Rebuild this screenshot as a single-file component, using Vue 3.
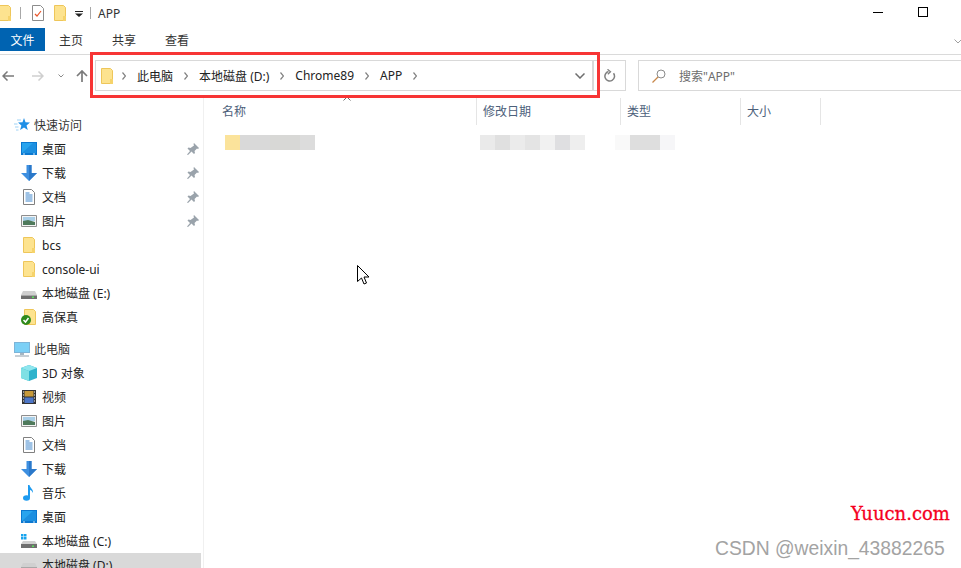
<script setup>
const tabs = ['主页', '共享', '查看']
const crumbs = ['此电脑', '本地磁盘 (D:)', 'Chrome89', 'APP']
const nav = [
  { t: '快速访问', i: 'star', head: true },
  { t: '桌面', i: 'desktop', pin: true },
  { t: '下载', i: 'down', pin: true },
  { t: '文档', i: 'doc', pin: true },
  { t: '图片', i: 'pic', pin: true },
  { t: 'bcs', i: 'folder' },
  { t: 'console-ui', i: 'folder' },
  { t: '本地磁盘 (E:)', i: 'drive' },
  { t: '高保真', i: 'check' },
  { t: '', i: '', blank: true },
  { t: '此电脑', i: 'pc', head: true },
  { t: '3D 对象', i: 'cube' },
  { t: '视频', i: 'film' },
  { t: '图片', i: 'pic' },
  { t: '文档', i: 'doc' },
  { t: '下载', i: 'down' },
  { t: '音乐', i: 'music' },
  { t: '桌面', i: 'desktop' },
  { t: '本地磁盘 (C:)', i: 'win' },
  { t: '本地磁盘 (D:)', i: 'drive', sel: true }
]
const cols = [
  { t: '名称', w: 273 },
  { t: '修改日期', w: 144 },
  { t: '类型', w: 120 },
  { t: '大小', w: 80 }
]
const nameCells = ['#fbe39b', '#d9d9d9', '#d9d9d9', '#d8d8d6', '#d8d8d6', '#dcdcdc']
const dateCells = ['#eaeaea', '#e0e0e0', '#ebebeb', '#e4e4e4', '#f1f1f1', '#dfdfe1', '#eeeeee']
const typeCells = ['#f9f9f9', '#dedede', '#dedede', '#f6f6f8']
</script>

<template>
  <div class="win">
    <svg class="defs" width="0" height="0">
      <defs>
        <symbol id="i-folder" viewBox="0 0 16 16">
          <path d="M2.500.5h9l2 2v13h-11z" fill="#fde38f" stroke="#eec65a"/>
          <path d="M11 11h3v5h-3z" fill="#f6d36b"/>
        </symbol>
        <symbol id="i-star" viewBox="0 0 16 16">
          <path d="M10 1l1.500 4.300 4.500.2-3.500 2.900 1.300 4.600-3.800-2.600-3.900 2.600 1.300-4.600-3.400-2.900 4.500-.2z" fill="#1f8fe6"/>
          <path d="M3 3h4M0 7h3.500M1 10h3.500M2 13h2.500" stroke="#9fd2f5"/>
        </symbol>
        <symbol id="i-desktop" viewBox="0 0 16 16">
          <path d="M0 1h16v13H0z" fill="#0b78d0"/>
          <path d="M1 2h14v10H1z" fill="#28a4ee"/>
          <path d="M1 12L12 2h3v10z" fill="#1c8fe0"/>
          <path d="M2 13h2M12 13h2" stroke="#cfe8fa"/>
        </symbol>
        <symbol id="i-down" viewBox="0 0 16 16">
          <path d="M5.500 0h5v8H16l-8 8-8-8h5.500z" fill="#3d8fe0"/>
          <path d="M8 0h2.500v8H16l-8 8z" fill="#2b78c9"/>
        </symbol>
        <symbol id="i-doc" viewBox="0 0 16 16">
          <path d="M2.500.5h8l3 3v12h-11z" fill="#fff" stroke="#808080"/>
          <path d="M4.500 4h4M4.500 6h7M4.500 8h7M4.500 10h7M4.500 12h7" stroke="#3f86cc"/>
        </symbol>
        <symbol id="i-pic" viewBox="0 0 16 16">
          <path d="M.5 2.500h15v11H.5z" fill="#f4f4f4" stroke="#8e8e8e"/>
          <path d="M2 4h12v4H2z" fill="#a9cfe8"/>
          <path d="M2 8l5-1 7 2v3H2z" fill="#4f7a5c"/>
        </symbol>
        <symbol id="i-drive" viewBox="0 0 16 16">
          <path d="M2 6h12l2 4H0z" fill="#d0d0d0"/>
          <path d="M0 10h16v4H0z" fill="#6f6f6f"/>
          <path d="M0 10h16v1H0z" fill="#a8a8a8"/>
          <path d="M11 11.500h2v1.500h-2z" fill="#5be05b"/>
        </symbol>
        <symbol id="i-win" viewBox="0 0 16 16">
          <path d="M2 8h12l2 3H0z" fill="#d0d0d0"/>
          <path d="M0 11h16v4H0z" fill="#6f6f6f"/>
          <path d="M11 12.500h2V14h-2z" fill="#5be05b"/>
          <path d="M0 1h2.500v2.500H0zM3 1h2.500v2.500H3zM0 4h2.500v2.500H0zM3 4h2.500v2.500H3z" fill="#18a4ee"/>
        </symbol>
        <symbol id="i-check" viewBox="0 0 16 16">
          <path d="M3.500.5h9l2 2v13h-11z" fill="#fde38f" stroke="#eec65a"/>
          <circle cx="5" cy="11" r="5" fill="#2f8a1c"/>
          <path d="M2.500 11l2 2 3-4" fill="none" stroke="#fff" stroke-width="1.500"/>
        </symbol>
        <symbol id="i-pc" viewBox="0 0 16 16">
          <path d="M0 1h16v11H0z" fill="#7db4d8"/>
          <path d="M1 2h14v9H1z" fill="#7cd0f6"/>
          <path d="M6 12h4v2H6z" fill="#a6b6c2"/>
          <path d="M1 15h14" stroke="#90a0ac"/>
        </symbol>
        <symbol id="i-cube" viewBox="0 0 16 16">
          <path d="M8 0l8 3v10l-8 3-8-3V3z" fill="#2eb3cc"/>
          <path d="M8 0l8 3-8 3-8-3z" fill="#8fe6ee"/>
          <path d="M0 3l8 3v10l-8-3z" fill="#7fe0e4"/>
        </symbol>
        <symbol id="i-film" viewBox="0 0 16 16">
          <path d="M1 1h14v14H1z" fill="#333"/>
          <path d="M3.500 2h9v5.500h-9z" fill="#c79a3a"/>
          <path d="M3.500 8.500h9V14h-9z" fill="#4d77c8"/>
          <path d="M2 3h1M2 6h1M2 9h1M2 12h1M13 3h1M13 6h1M13 9h1M13 12h1" stroke="#fff"/>
        </symbol>
        <symbol id="i-music" viewBox="0 0 16 16">
          <ellipse cx="5.500" cy="13" rx="3.500" ry="2.700" fill="#1d9bf0"/>
          <path d="M7 13V0h1.500c.5 3 4 4 3.500 8-1-2-2-3-3-3v8z" fill="#1d9bf0"/>
        </symbol>
      </defs>
    </svg>

    <header class="titlebar">
      <div class="qat">
        <svg class="qf"><use href="#i-folder"/></svg>
        <i class="vsep"></i>
        <svg class="qd" viewBox="0 0 12 16">
          <path d="M.5.500h8l3 3v12H.5z" fill="#fff" stroke="#8c8c8c"/>
          <path d="M3 9l2 2 4-5" fill="none" stroke="#e8552a" stroke-width="1.200"/>
        </svg>
        <svg class="qf2"><use href="#i-folder"/></svg>
        <svg class="qa" viewBox="0 0 8 6"><path d="M0 0h8v1H0zM0 2.500h8L4 6z" fill="#222"/></svg>
        <i class="vsep2"></i>
        <span class="wtitle">APP</span>
      </div>
      <div class="wctl">
        <i class="wmin"></i>
        <i class="wmax"></i>
      </div>
    </header>

    <nav class="ribbon">
      <span class="filetab">文件</span>
      <span v-for="t in tabs" :key="t" class="tab">{{ t }}</span>
      <svg class="collapse" viewBox="0 0 8 5"><path d="M.5.500L4 4l3.500-3.500" fill="none" stroke="#a0a0a0"/></svg>
    </nav>

    <section class="addr">
      <div class="navbtns">
        <svg class="back" viewBox="0 0 12 10"><path d="M12 5H1M5.500.500L1 5l4.500 4.500" fill="none" stroke="#7a7a7a" stroke-width="1.500"/></svg>
        <svg class="fwd" viewBox="0 0 12 10"><path d="M0 5h11M6.500.500L11 5 6.500 9.500" fill="none" stroke="#cfcfcf" stroke-width="1.500"/></svg>
        <svg class="dn" viewBox="0 0 6 4"><path d="M.5.500L3 3 5.500.500" fill="none" stroke="#8a8a8a"/></svg>
        <svg class="up" viewBox="0 0 12 12"><path d="M6 12V1M1 6l5-5 5 5" fill="none" stroke="#7a7a7a" stroke-width="1.700"/></svg>
      </div>
      <div class="pathbox">
        <svg class="pf"><use href="#i-folder"/></svg>
        <svg class="crumbchev first" viewBox="0 0 4 8"><path d="M.5.500L3.500 4 .5 7.500" fill="none" stroke="#808080" stroke-width="1.200"/></svg>
        <template v-for="c in crumbs" :key="c">
          <span class="crumb">{{ c }}</span>
          <svg class="crumbchev" viewBox="0 0 4 8"><path d="M.5.500L3.500 4 .5 7.500" fill="none" stroke="#808080" stroke-width="1.200"/></svg>
        </template>
        <svg class="pathdrop" viewBox="0 0 10 6"><path d="M.5.500L5 5 9.500.500" fill="none" stroke="#6e6e6e" stroke-width="1.500"/></svg>
      </div>
      <div class="refresh">
        <svg viewBox="0 0 12 13"><path d="M9.500 4.300A4.800 4.800 0 1 1 4.500 2.600" fill="none" stroke="#808080" stroke-width="1.500"/><path d="M3.500.3L6.500 2.700 3.800 5.300" fill="none" stroke="#808080" stroke-width="1.300"/></svg>
      </div>
      <div class="search">
        <svg viewBox="0 0 14 14"><circle cx="9" cy="5" r="4" fill="none" stroke="#8a8a8a"/><path d="M6 8L.5 13.500" stroke="#c8884a" stroke-width="1.200"/></svg>
        <span>搜索"APP"</span>
      </div>
    </section>

    <main class="body">
      <aside class="side">
        <div
          v-for="(n, k) in nav"
          :key="k"
          class="row"
          :class="{ head: n.head, sel: n.sel, blank: n.blank }"
        >
          <template v-if="!n.blank">
            <svg class="ic"><use :href="'#i-' + n.i"/></svg>
            <span class="lbl">{{ n.t }}</span>
            <svg v-if="n.pin" class="pin" viewBox="0 0 12 12"><path d="M7 0l5 5-1 1-1-.5-2.500 2.500.5 2-1 1-2.500-2.500L1 12l-1-.5 3-3.500L.5 5.500l1-1 2 .5L7 2.500 6.500 1z" fill="#9aa3ab"/></svg>
          </template>
        </div>
      </aside>
      <section class="list">
        <div class="cols">
          <svg class="sort" viewBox="0 0 8 5"><path d="M.5 4.500L4 1l3.500 3.500" fill="none" stroke="#6e6e6e"/></svg>
          <div v-for="c in cols" :key="c.t" class="col" :style="{ width: c.w + 'px' }">{{ c.t }}</div>
        </div>
        <div class="frow">
          <div class="fcell name">
            <i v-for="(c, k) in nameCells" :key="k" :style="{ background: c }"></i>
          </div>
          <div class="fcell date">
            <i v-for="(c, k) in dateCells" :key="k" :style="{ background: c }"></i>
          </div>
          <div class="fcell type">
            <i v-for="(c, k) in typeCells" :key="k" :style="{ background: c }"></i>
          </div>
        </div>
      </section>
    </main>

    <div class="redbox"></div>
    <svg class="cursor" viewBox="0 0 13 21"><path d="M.5.500v16l4-3.500 2.500 6 2.500-1-2.500-6h5z" fill="#fff" stroke="#000"/></svg>
    <div class="yuucn">Yuucn.com</div>
    <div class="csdn">CSDN @weixin_43882265</div>
  </div>
</template>

<style>
html, body { margin: 0; background: #fff; }
</style>

<style scoped>
.win {
  position: relative;
  width: 961px;
  height: 568px;
  overflow: hidden;
  background: #fff;
  color: #1a1a1a;
  font-family: "Noto Sans", "Noto Sans CJK SC", sans-serif;
  font-size: 12px;
}
.defs { position: absolute; }
svg { display: block; flex: none; }

.titlebar { height: 28px; display: flex; justify-content: space-between; box-sizing: border-box; }
.qat { display: flex; align-items: center; margin-left: -3px; height: 26px; }
.qf { width: 16px; height: 16px; }
.vsep { width: 1px; height: 12px; background: #a8a8a8; margin: 0 11px 0 7px; }
.qd { width: 12px; height: 16px; margin-right: 8px; }
.qf2 { width: 16px; height: 16px; margin-right: 5px; }
.qa { width: 8px; height: 6px; margin: 2px 7px 0 2px; }
.vsep2 { width: 1px; height: 12px; background: #a8a8a8; margin-right: 7px; }
.wtitle { font-size: 12px; color: #333; }
.wctl { display: flex; align-items: flex-start; }
.wmin { width: 10px; height: 1px; background: #000; margin: 12px 35px 0 0; }
.wmax { width: 8px; height: 8px; border: 1px solid #000; margin: 7px 33px 0 0; }

.ribbon {
  height: 27px;
  display: flex;
  border-bottom: 1px solid #dadada;
  box-sizing: border-box;
  position: relative;
}
.filetab {
  width: 45px;
  height: 23px;
  background: #0063b1;
  color: #fff;
  display: flex;
  align-items: center;
  justify-content: center;
  margin-right: 14px;
}
.tab { width: 24px; margin-right: 29px; height: 23px; line-height: 25px; color: #333; }
.collapse { position: absolute; right: -1px; top: 11px; width: 8px; height: 5px; }

.addr { height: 43px; display: flex; padding-top: 5px; box-sizing: border-box; }
.navbtns { width: 95px; height: 31px; position: relative; display: flex; align-items: center; flex: none; }
.back { width: 12px; height: 10px; margin-left: 2px; }
.fwd { width: 12px; height: 10px; margin-left: 18px; }
.dn { width: 6px; height: 4px; margin-left: 14px; }
.up { width: 12px; height: 12px; margin-left: 12px; }
.pathbox {
  width: 499px;
  height: 31px;
  box-sizing: border-box;
  border: 1px solid #d9d9d9;
  border-right-width: 2px;
  display: flex;
  align-items: center;
  padding-left: 3px;
  flex: none;
}
.pf { width: 16px; height: 16px; margin-right: 7px; }
.crumb { color: #222; white-space: nowrap; }
.crumbchev { width: 4px; height: 8px; margin: 0 11px; }
.crumbchev.first { margin: 0 11px 0 0; }
.pathdrop { width: 10px; height: 6px; margin-left: auto; margin-right: 7px; }
.refresh {
  width: 32px;
  height: 31px;
  box-sizing: border-box;
  border: 1px solid #d9d9d9;
  border-left: 0;
  display: flex;
  align-items: center;
  justify-content: center;
  flex: none;
}
.refresh svg { width: 12px; height: 13px; }
.search {
  margin-left: 12px;
  flex: 1;
  height: 31px;
  box-sizing: border-box;
  border: 1px solid #d9d9d9;
  border-right: 0;
  display: flex;
  align-items: center;
  padding-left: 13px;
  color: #6d6d6d;
}
.search svg { width: 14px; height: 14px; margin-right: 13px; }

.body { display: flex; height: 471px; }
.side { width: 204px; flex: none; padding-top: 15px; box-sizing: border-box; border-right: 1px solid #f0f0f0; }
.row { height: 24px; display: flex; align-items: center; padding-left: 21px; width: 201px; box-sizing: border-box; position: relative; color: #222; }
.row.blank { height: 8px; }
.row.head { padding-left: 14px; color: #333; }
.row.sel { background: #d9d9d9; }
.ic { width: 16px; height: 16px; margin-right: 5px; }
.row.head .ic { margin-right: 4px; }
.pin { position: absolute; left: 187px; top: 6px; width: 12px; height: 12px; }

.list { flex: 1; position: relative; }
.cols { display: flex; height: 27px; position: relative; }
.sort { position: absolute; left: 139px; top: -2px; width: 8px; height: 5px; }
.col {
  box-sizing: border-box;
  border-right: 1px solid #e5e5e5;
  padding-left: 6px;
  line-height: 27px;
  color: #4c607a;
}
.col:first-of-type { padding-left: 18px; }
.frow { display: flex; margin-top: 10px; position: relative; }
.fcell { display: flex; height: 15px; }
.fcell i { width: 15px; height: 15px; display: block; }
.name { margin-left: 21px; width: 255px; flex: none; }
.date { width: 135px; flex: none; }
.type { flex: none; }

.redbox {
  position: absolute;
  left: 90px;
  top: 52px;
  width: 510px;
  height: 46px;
  box-sizing: border-box;
  border: 3px solid #f73535;
}
.cursor { position: absolute; left: 357px; top: 265px; width: 13px; height: 21px; }
.yuucn {
  position: absolute;
  left: 851px;
  top: 503px;
  font-family: "DejaVu Serif", "Liberation Serif", serif;
  font-size: 18px;
  color: #f5001e;
  -webkit-text-stroke: .3px #f5001e;
}
.csdn {
  position: absolute;
  left: 715px;
  top: 538px;
  font-family: "Liberation Sans", sans-serif;
  font-size: 19.3px;
  color: #a3a3a3;
  white-space: nowrap;
}
</style>
